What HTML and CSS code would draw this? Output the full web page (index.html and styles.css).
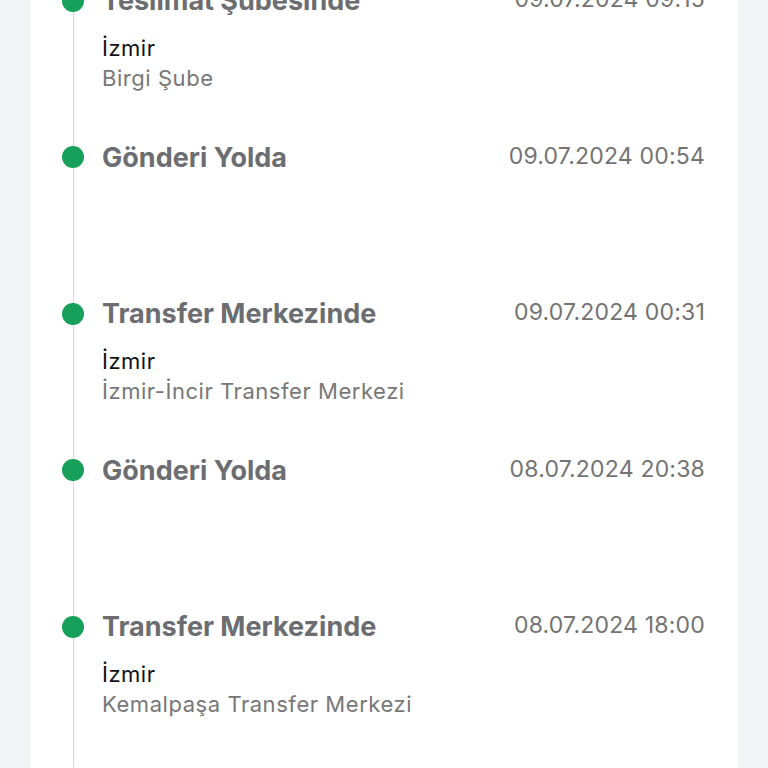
FILE: index.html
```html
<!DOCTYPE html>
<html lang="tr">
<head>
<meta charset="utf-8">
<link rel="stylesheet" href="styles.css">
</head>
<body>
<div class="card">
  <ul class="timeline">
    <li class="item">
      <span class="dot"></span>
      <div class="head"><span class="title">Teslimat Şubesinde</span><span class="date">09.07.2024 09:15</span></div>
      <div class="city">İzmir</div>
      <div class="branch">Birgi Şube</div>
    </li>
    <li class="item">
      <span class="dot"></span>
      <div class="head"><span class="title">Gönderi Yolda</span><span class="date">09.07.2024 00:54</span></div>
    </li>
    <li class="item">
      <span class="dot"></span>
      <div class="head"><span class="title">Transfer Merkezinde</span><span class="date">09.07.2024 00:31</span></div>
      <div class="city">İzmir</div>
      <div class="branch">İzmir-İncir Transfer Merkezi</div>
    </li>
    <li class="item">
      <span class="dot"></span>
      <div class="head"><span class="title">Gönderi Yolda</span><span class="date">08.07.2024 20:38</span></div>
    </li>
    <li class="item">
      <span class="dot"></span>
      <div class="head"><span class="title">Transfer Merkezinde</span><span class="date">08.07.2024 18:00</span></div>
      <div class="city">İzmir</div>
      <div class="branch">Kemalpaşa Transfer Merkezi</div>
    </li>
  </ul>
</div>
</body>
</html>
```

FILE: styles.css
```css
html, body {
  margin: 0;
  padding: 0;
  background: #f3f4f6;
  height: 768px;
  overflow: hidden;
  font-family: Inter, "Noto Sans", sans-serif;
}
.card {
  margin-left: 31px;
  width: 707px;
  background: #ffffff;
  min-height: 900px;
  margin-top: -15.5px;
}
.timeline {
  list-style: none;
  margin: 0 0 0 42px;
  padding: 0 33px 0 0;
  border-left: 1.5px solid #d6d6d8;
}
.item {
  position: relative;
  min-height: 156.5px;
  padding-left: 28px;
  box-sizing: border-box;
}
.dot {
  position: absolute;
  left: -12.5px;
  top: 5px;
  width: 22px;
  height: 22px;
  border-radius: 50%;
  background: #16a05a;
}
.head {
  display: flex;
  justify-content: space-between;
  align-items: center;
  height: 32px;
  margin-bottom: 16px;
}
.title {
  font-size: 27px;
  font-weight: 700;
  color: #6b6d71;
}
.date {
  font-size: 23px;
  letter-spacing: 0.2px;
  color: #737373;
  margin-top: -3px;
}
.city {
  font-size: 22px;
  letter-spacing: 0.5px;
  line-height: 30px;
  color: #111111;
}
.branch {
  font-size: 22px;
  letter-spacing: 0.55px;
  line-height: 30px;
  color: #777777;
}
```
